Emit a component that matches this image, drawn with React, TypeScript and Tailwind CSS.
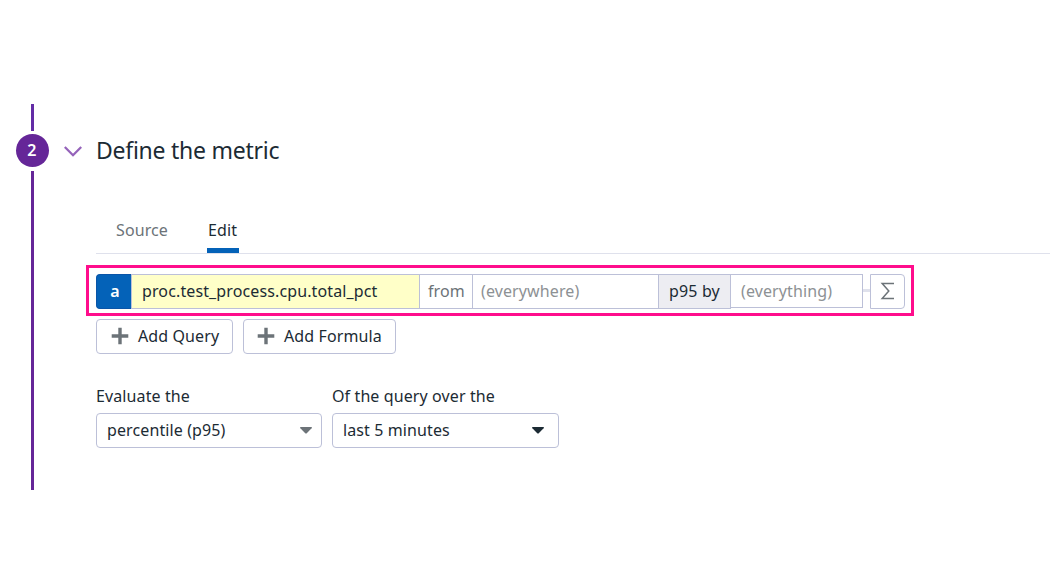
import React from "react";

function Plus() {
  return (
    <svg width="18" height="18" viewBox="0 0 18 18" className="block shrink-0">
      <path d="M9 0.7v16.6M0.7 9h16.6" stroke="#6c7378" strokeWidth="3.4" fill="none" />
    </svg>
  );
}

function Caret({ color }: { color: string }) {
  return (
    <svg width="12" height="7" viewBox="0 0 12 7" className="block shrink-0">
      <path d="M0.6 0H11.4Q12.4 0.4 11.6 1.3L7 6Q6 7 5 6L0.4 1.3Q-0.4 0.4 0.6 0Z" fill={color} />
    </svg>
  );
}

function StepRail() {
  return (
    <div className="flex w-[33px] shrink-0 flex-col items-center">
      <div className="h-[27px] w-[3px] bg-[#632ca6]" />
      <div className="mt-[3px] flex h-[33px] w-[33px] items-center justify-center rounded-full bg-[#652698] text-[16px] leading-none font-semibold text-white">
        <span className="-mt-px -ml-px">2</span>
      </div>
      <div className="mt-1 h-[319px] w-[3px] bg-[#652698]" />
    </div>
  );
}

function ActionButton({ label, className }: { label: string; className: string }) {
  return (
    <button
      className={`flex h-[35px] items-center rounded-[4px] border border-[#bcc0d8] pb-[2px] ${className}`}
    >
      <Plus />
      <span className="ml-[9px]">{label}</span>
    </button>
  );
}

function SelectField({ label, value, color, className }: { label: string; value: string; color: string; className: string }) {
  return (
    <div className={className}>
      <div className="h-[29px] leading-[24px]">{label}</div>
      <div className="flex h-[35px] items-center justify-between rounded-[4px] border border-[#bcc0d8] pl-[10px]">
        <span className="pb-[2px]">{value}</span>
        <Caret color={color} />
      </div>
    </div>
  );
}

function QueryRow() {
  return (
    <div className="-ml-[10px] flex h-[51px] w-[828px] border-3 border-[#ff0d8c] pt-[6px] pl-[7px]">
      <div className="flex h-[35px] w-[35px] items-center justify-center rounded-l-[4px] border border-r-0 border-[#0a55a8] bg-[#0462b8] pb-[2px] font-semibold text-white">
        <span className="ml-[2px]">a</span>
      </div>
      <div className="flex h-[35px] w-[288px] items-center border-y border-l border-[#bcc0d8] bg-[#ffffc8] pb-[2px] pl-[10px] tracking-[0.12px]">
        proc.test_process.cpu.total_pct
      </div>
      <div className="flex h-[35px] w-[53px] items-center border-y border-l border-[#bcc0d8] pb-[2px] pl-[8px] text-[#6c7378]">from</div>
      <div className="flex h-[35px] w-[186px] items-center border-y border-l border-[#bcc0d8] pb-[2px] pl-[8px] text-[#8d9194]">
        (everywhere)
      </div>
      <div className="flex h-[35px] w-[73px] items-center border border-[#bcc0d8] bg-[#ededf2] pb-[2px] pl-[10px] tracking-[0.15px]">p95 by</div>
      <div className="flex h-[34px] w-[132px] items-center border-y border-r border-[#bcc0d8] pb-px pl-[10px] text-[#8d9194]">
        (everything)
      </div>
      <div className="mt-[15px] h-[3px] w-[7px] bg-[#dfe1ec]" />
      <div className="flex h-[35px] w-[35px] items-center justify-center rounded-r-[4px] border border-[#bcc0d8] pb-px">
        <svg width="15" height="18" viewBox="0 0 15 18" className="block">
          <path d="M14 1.5H2.2L8.8 9L2.2 16.5H14" fill="none" stroke="#6c7378" strokeWidth="1.5" />
        </svg>
      </div>
    </div>
  );
}

export default function App() {
  return (
    <div className="flex h-[582px] w-[1050px] overflow-hidden bg-white pt-[104px] pl-4 font-['Noto_Sans',sans-serif] text-[16px] leading-[24px] tracking-[0.11px] whitespace-nowrap text-[#1c2b34]">
      <StepRail />
      <main className="ml-[15px] min-w-0 grow">
        <header className="flex h-[94px] items-center">
          <svg width="18" height="11" viewBox="0 0 18 11" className="block">
            <path d="M0.8 1L9 9.2L17.2 1" fill="none" stroke="#9563ba" strokeWidth="2.3" />
          </svg>
          <h1 className="ml-[14px] pb-[2px] text-[23px] leading-[32px] tracking-[-0.25px]">Define the metric</h1>
        </header>
        <div className="ml-8">
          <nav className="flex h-[56px] items-end border-b border-[#dfe1ec] pl-5">
            <span className="h-[35px] text-[#6c7378]">Source</span>
            <span className="ml-[39px] flex h-[35px] w-8 flex-col justify-between">
              <span className="pl-px">Edit</span>
              <span className="h-[5px] bg-[#0462b8]" />
            </span>
          </nav>
          <div className="pt-[11px]">
            <QueryRow />
          </div>
          <div className="mt-[3px] flex gap-[10px]">
            <ActionButton label="Add Query" className="w-[137px] pl-[14px]" />
            <ActionButton label="Add Formula" className="w-[153px] pl-[13px]" />
          </div>
          <div className="mt-[30px] flex gap-[10px]">
            <SelectField label="Evaluate the" value="percentile (p95)" color="#6c7378" className="w-[226px] [&_svg]:mr-[9px]" />
            <SelectField label="Of the query over the" value="last 5 minutes" color="#1c2b34" className="w-[227px] [&_svg]:mr-[14px]" />
          </div>
        </div>
      </main>
    </div>
  );
}
